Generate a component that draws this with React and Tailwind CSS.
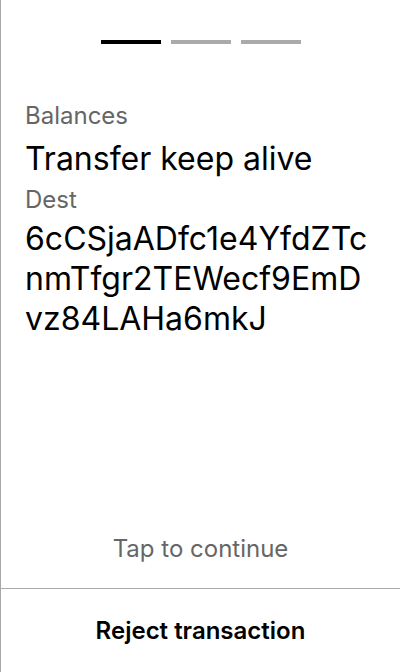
import React from 'react';

const address = '6cCSjaADfc1e4YfdZTcnmTfgr2TEWecf9EmDvz84LAHa6mkJ';

function Progress({ step = 0, total = 3 }) {
  return (
    <div className="flex justify-center gap-[10px] pt-10">
      {Array.from({ length: total }).map((_, i) => (
        <div key={i} className={i === step ? 'h-1 w-[60px] bg-black' : 'h-1 w-[60px] bg-[#aaaaaa]'} />
      ))}
    </div>
  );
}

export default function App() {
  return (
    <div
      className="flex h-[672px] w-[400px] flex-col border-l border-[#a8a8a8] bg-white text-black"
      style={{ fontFamily: 'Inter, "Noto Sans", sans-serif' }}
    >
      <Progress />

      <div className="flex-1 px-6 pt-[57px]">
        <div className="text-[24px] leading-[30px] text-[#666666]">Balances</div>
        <div className="mt-[9px] text-[32px] leading-[38px]">Transfer keep alive</div>
        <div className="mt-[7px] text-[24px] leading-[30px] text-[#666666]">Dest</div>
        <div className="mt-[4px] break-all text-[32px] leading-[40px]">{address}</div>
      </div>

      <div className="pb-[23px] text-center text-[24px] leading-[32px] text-[#666666]">
        Tap to continue
      </div>

      <button className="h-[84px] border-t border-[#aaaaaa] text-[24px] font-semibold">
        Reject transaction
      </button>
    </div>
  );
}
